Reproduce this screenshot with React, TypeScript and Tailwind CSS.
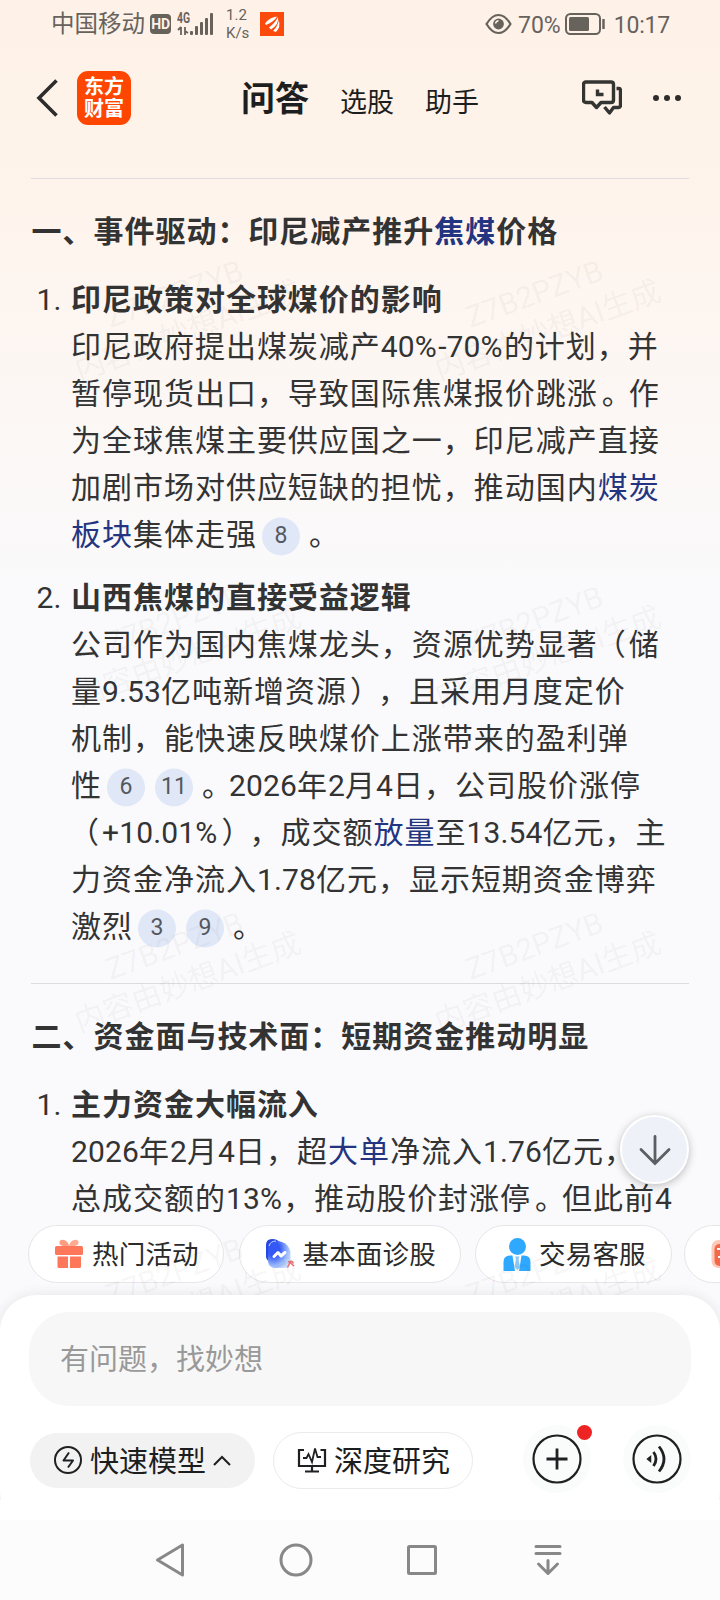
import React from "react";

type Part = string | { link: string } | { refs: number[] };

const WATERMARK_ROWS = [312, 638, 964, 1290];
const WATERMARK_COLS = [181, 541];

// Latin runs sit tighter than the Chinese text around them,
// stops and brackets are nudged towards the middle of their cell
function Mixed({ text }: { text: string }) {
  return (
    <>
      {text.split(/([0-9+.-]+|%|。|（|）)/).map((s, i) => {
        if (i % 2 === 0) return s;
        if (s === "。") return <span key={i} className="inline-block translate-x-1">{s}</span>;
        if (s === "（") return <span key={i} className="inline-block -translate-x-0.5">{s}</span>;
        if (s === "）") return <span key={i} className="inline-block translate-x-[3px]">{s}</span>;
        return (
          <span key={i} className={s === "%" ? "tracking-[1.3px]" : "tracking-[0.15px]"}>
            {s}
          </span>
        );
      })}
    </>
  );
}

function Line({ parts, bold }: { parts: Part[]; bold?: boolean }) {
  return (
    <div className={`flex h-[47px] items-center whitespace-nowrap ${bold ? "font-bold" : ""}`}>
      {parts.map((p, i) => {
        if (typeof p === "string") {
          return (
            <span key={i}>
              <Mixed text={p} />
            </span>
          );
        }
        if ("link" in p) {
          return (
            <span key={i} className="text-[#233580]">
              {p.link}
            </span>
          );
        }
        return p.refs.map((n) => (
          <span
            key={n}
            className="mx-[5px] flex size-[38px] translate-y-[1.5px] items-center justify-center rounded-full bg-[#e0e8f7] text-[23px] tracking-normal text-[#55585f]"
          >
            {n}
          </span>
        ));
      })}
    </div>
  );
}

function Item({ no, title, lines }: { no: number; title: string; lines: Part[][] }) {
  return (
    <li className="flex">
      <span className="w-10 shrink-0 pl-[5.5px] leading-[47px] tracking-normal">{no}.</span>
      <div>
        <Line bold parts={[title]} />
        {lines.map((l, i) => (
          <Line key={i} parts={l} />
        ))}
      </div>
    </li>
  );
}

function StatusBar() {
  return (
    <div className="flex h-12 shrink-0 items-center pl-[51px] pr-[50px] text-[#68625d]">
      <span className="mt-[2px] text-[23.5px] leading-none">中国移动</span>
      <span className="ml-[5px] flex h-5 w-[21px] items-center justify-center rounded bg-[#68625d] text-[14px] font-bold leading-none tracking-tight text-[#fef2e8]">
        HD
      </span>
      <svg className="ml-[6px]" width="38" height="26" viewBox="0 0 38 26" fill="#68625d">
        <text x="0" y="11.500" fontSize="14" fontWeight="700" fontFamily="Roboto" textLength="13" lengthAdjust="spacingAndGlyphs">
          4G
        </text>
        <path d="M4 16v8M1 19l3-3M8 16v8M8 20l3 2" stroke="#68625d" strokeWidth="1.800" fill="none" />
        <rect x="13" y="20" width="3" height="4" rx="1" />
        <rect x="18" y="15" width="3" height="9" rx="1" />
        <rect x="23" y="11" width="3" height="13" rx="1" />
        <rect x="28" y="7" width="3" height="17" rx="1" />
        <rect x="33" y="2" width="3" height="22" rx="1" />
      </svg>
      <span className="ml-[11px] w-[34px] text-[15px] leading-[18px]">
        1.2
        <br />
        K/s
      </span>
      <svg width="24" height="24" viewBox="0 0 24 24">
        <rect width="24" height="24" fill="#fb4a0b" />
        <path d="M5 11.500Q10 5 17 4.500Q14 10 6 13Z" fill="#fff" />
        <path d="M9 15.500Q15 11 18 5Q19.500 12 11 17.500Z" fill="#fff" />
        <path d="M13 19Q18 14 18.800 8Q21 15 16 20Z" fill="#fff" />
      </svg>
      <div className="ml-auto flex items-center">
        <svg width="27" height="22" viewBox="0 0 27 22" fill="none" stroke="#68625d" strokeWidth="2.200">
          <path d="M1.500 11Q7 2 13.500 2T25.500 11Q20 20 13.500 20T1.500 11Z" />
          <circle cx="13.500" cy="11" r="5.400" fill="#68625d" stroke="none" />
          <path d="M10.500 10.500q.5-2.500 3-2.800" stroke="#fef2e8" strokeWidth="1.400" />
        </svg>
        <span className="ml-[6px] mt-[2px] text-[23px] leading-none">70%</span>
        <svg className="ml-[4px]" width="41" height="22" viewBox="0 0 41 22" fill="none" stroke="#68625d">
          <rect x="1" y="1" width="34" height="20" rx="4.500" strokeWidth="2" />
          <rect x="4" y="4" width="20" height="14" rx="1.500" fill="#68625d" stroke="none" />
          <path d="M38.500 6v10" strokeWidth="2.500" />
        </svg>
        <span className="ml-[8px] mt-[2px] text-[23px] leading-none tracking-[-0.2px]">10:17</span>
      </div>
    </div>
  );
}

function Header() {
  return (
    <header className="flex h-[100px] shrink-0 items-center pl-[36px] pr-[38px] text-[#1d1e20]">
      <svg width="23" height="38" viewBox="0 0 23 38" fill="none" stroke="#2d2d2d" strokeWidth="3.600">
        <path d="M20.500 1.500L3 19L20.500 36.500" />
      </svg>
      <div className="ml-[18px] flex size-[54px] flex-col items-center justify-center rounded-[11px] bg-[#ff4600] text-[20px] font-bold leading-[22px] text-white">
        <span>东方</span>
        <span>财富</span>
      </div>
      <nav className="ml-[110px] flex items-center">
        <span className="mt-[2px] text-[34px] font-bold leading-none">问答</span>
        <span className="ml-[31px] mt-[10px] text-[27px] leading-none">选股</span>
        <span className="ml-[31px] mt-[10px] text-[27px] leading-none">助手</span>
      </nav>
      <svg className="ml-auto" width="40" height="36" viewBox="0 0 40 36" fill="none" stroke="#343432" strokeWidth="3.400" strokeLinejoin="round">
        <path d="M4 2H29Q31.500 2 31.500 4.500V20Q31.500 22.500 29 22.500H19L14.500 27.500L10 22.500H4Q1.500 22.500 1.500 20V4.500Q1.500 2 4 2Z" />
        <path d="M34.500 8.500H37Q38.500 8.500 38.500 10.500V25Q38.500 27.500 36.500 27.500H31.500L27.500 33L22.500 27" />
        <path d="M15.500 9.500V14.500H21.500" strokeLinejoin="miter" />
      </svg>
      <svg className="ml-[30px]" width="30" height="8" viewBox="0 0 30 8" fill="#2d2d2d">
        <circle cx="4" cy="4" r="3" />
        <circle cx="15" cy="4" r="3" />
        <circle cx="26" cy="4" r="3" />
      </svg>
    </header>
  );
}

function Chip({ icon, label, className }: { icon: React.ReactNode; label?: string; className: string }) {
  return (
    <div
      className={`flex h-[58px] shrink-0 items-center rounded-full border border-[#e6e6e8] bg-white text-[26.5px] text-[#2b2b2b] ${className}`}
    >
      {icon}
      {label && <span className="ml-2 mt-[3px] whitespace-nowrap leading-none tracking-[0.2px]">{label}</span>}
    </div>
  );
}

const giftIcon = (
  <svg width="30" height="30" viewBox="0 0 30 30">
    <path d="M15 7Q7 8 5.500 4.500Q5 0 10 1Q14 2 15 7Z" fill="#ff9c80" />
    <path d="M15 7Q23 8 24.500 4.500Q25 0 20 1Q16 2 15 7Z" fill="#ffab92" />
    <rect x="1" y="7" width="28" height="9" rx="1.500" fill="#ff775a" />
    <path d="M3.500 17.500H14V29H5Q3.500 29 3.500 27.500ZM16 17.500H27V27.500Q27 29 25.500 29H16Z" fill="#ff775a" />
  </svg>
);

const diagnoseIcon = (
  <svg width="30" height="32" viewBox="0 0 30 32">
    <defs>
      <radialGradient id="diag" cx="0.25" cy="0.3" r="0.9">
        <stop offset="0.300" stopColor="#3358f6" />
        <stop offset="0.700" stopColor="#9dbcfb" />
        <stop offset="1" stopColor="#dcebff" />
      </radialGradient>
    </defs>
    <path d="M1 7Q1 1 7 1Q13 1 15 5L10 24H6Q1 23 1 18Z" fill="#2747e0" />
    <path d="M3 10Q3 3 10 3Q18 3 22 7Q25.500 11 25.500 16V24Q25.500 30 19 30H10Q3.500 30 3 23Z" fill="url(#diag)" />
    <path d="M4 8Q5.500 3 11 3" stroke="#c5d6ff" strokeWidth="1" fill="none" />
    <path d="M9 18.500L13 14.500L16 18L20 14.500" stroke="#fff" strokeWidth="3" fill="none" strokeLinecap="round" strokeLinejoin="round" />
    <path d="M22.500 29.500L25 24.500L29 28M23 24Q27 22 28.500 25.500" stroke="#e8737a" strokeWidth="1.600" fill="none" />
  </svg>
);

const serviceIcon = (
  <svg width="28" height="34" viewBox="0 0 28 34">
    <circle cx="14.500" cy="9.500" r="8.500" fill="#2fa8ff" />
    <path d="M.5 34V25Q.5 18.500 7 18.500H9.500L12 34Z" fill="#2fa8ff" />
    <path d="M27.500 34V25Q27.500 18.500 21 18.500H18.500L16 34Z" fill="#2fa8ff" />
    <path d="M12 19.500H16.500L15.500 22L17 30L14.300 33L11.500 30L13 22Z" fill="#8cc6f5" />
  </svg>
);

const hotIcon = (
  <svg width="30" height="30" viewBox="0 0 30 30">
    <rect x="0.500" y="1" width="29" height="28" rx="7" fill="#ffc9b8" />
    <rect x="3.500" y="5" width="26" height="22" rx="5" fill="#f4684a" />
    <path d="M6 10H22M12 6V14M7 18H22" stroke="#fff" strokeWidth="2.200" />
  </svg>
);

function Composer() {
  return (
    <>
      <section className="relative z-20 -mb-7 flex h-[233px] shrink-0 flex-col rounded-[36px] bg-white px-[29px] pt-[17px] shadow-[0_0_14px_rgba(0,0,0,0.09)]">
        <div className="flex h-[94px] shrink-0 items-center rounded-[40px] bg-[#f7f7f7] pl-[31px] pt-[3px] text-[29px] text-[#999]">
          有问题，找妙想
        </div>
        <div className="mt-[19px] flex h-[68px] shrink-0 items-center text-[29px] leading-none text-[#1c1d1f]">
          <button type="button" className="ml-px mt-[3px] flex h-[55px] w-[225px] items-center rounded-full bg-[#f2f2f2] pl-[24px]">
            <svg className="-mt-px" width="28" height="28" viewBox="0 0 28 28" fill="none" stroke="#1f2022" strokeWidth="2">
              <circle cx="14" cy="14" r="13" />
              <path d="M15 6.500L9.500 14.500H19L14 21.500" strokeLinejoin="round" />
            </svg>
            <span className="ml-[8px] mt-[4px]">快速模型</span>
            <svg className="ml-[7px]" width="18" height="11" viewBox="0 0 18 11" fill="none" stroke="#1f2022" strokeWidth="2">
              <path d="M1 10L9 2L17 10" />
            </svg>
          </button>
          <button type="button" className="ml-[18px] mt-[3px] flex h-[57px] w-[200px] items-center rounded-full border border-[#ebebeb] bg-white pl-[23px]">
            <svg className="-mt-px" width="30" height="28" viewBox="0 0 30 28" fill="none" stroke="#1f2022" strokeWidth="2.200">
              <path d="M7 4H2V20H28V4H23.500" />
              <path d="M6 12H9.500L11.500 8L15 16L18 2.500L20.500 11H24" strokeWidth="1.800" />
              <path d="M15 20V25.500M8 25.500H22" />
            </svg>
            <span className="ml-[7px] mt-[4px]">深度研究</span>
          </button>
          <button type="button" className="relative ml-[50px] flex size-[68px] items-center justify-center rounded-full bg-[#fafbfb]">
            <svg width="50" height="50" viewBox="0 0 50 50" fill="none" stroke="#1f2022" strokeWidth="2.200">
              <circle cx="25" cy="25" r="23.500" />
              <path d="M14.500 25H35.500M25 14.500V35.500" strokeWidth="2.800" />
            </svg>
            <span className="absolute -right-px top-0 size-[15px] rounded-full bg-[#ee2424]" />
          </button>
          <button type="button" className="ml-[32px] flex size-[68px] shrink-0 items-center justify-center rounded-full bg-[#fafbfb]">
            <svg width="50" height="50" viewBox="0 0 50 50" fill="none" stroke="#1f2022">
              <circle cx="25" cy="25" r="23.500" strokeWidth="2.200" />
              <path d="M15.500 25L18.500 22.500V27.500Z" fill="#1f2022" strokeWidth="1.500" />
              <path d="M21.500 18Q26.500 25 21.500 32M27 12.500Q37 25 27 37.500" strokeWidth="2.800" />
            </svg>
          </button>
        </div>
      </section>
      <div className="relative z-20 h-5 shrink-0 bg-white" />
    </>
  );
}

function SystemNav() {
  return (
    <footer className="relative z-20 flex h-20 shrink-0 items-center bg-[#fcfcfc] pl-[153px]">
      <svg width="409" height="40" viewBox="0 0 409 40" fill="none" stroke="#888" strokeWidth="3" strokeLinejoin="round" strokeLinecap="round">
        <path d="M29.500 5V35L4.500 20Z" />
        <circle cx="143" cy="20" r="15" />
        <rect x="255.500" y="6.500" width="27" height="27" rx="1" />
        <path d="M383 6.500H407M383 13.500H407M395 20.500V33M385.500 24L395 33.500L404.500 24" />
      </svg>
    </footer>
  );
}

export default function App(): React.ReactElement {
  return (
    <main className="relative flex h-[1600px] w-[720px] flex-col overflow-hidden bg-[#fafafd] bg-[linear-gradient(180deg,#fef2e8_0px,#fef3ea_160px,#fef5ef_260px,#fcf7f4_400px,#fafafc_600px,#fafafd_700px)] font-['Roboto','Noto_Sans_CJK_SC',sans-serif] [text-spacing-trim:space-all]">
      <StatusBar />
      <Header />

      <article className="h-[1077px] shrink-0 overflow-hidden px-[31px] pt-[30px] text-[30px] tracking-[0.98px] text-[#333]">
        <hr className="border-[#dfdddd]" />
        <h2 className="mt-[29px] pl-[0.5px]">
          <Line bold parts={["一、事件驱动：印尼减产推升", { link: "焦煤" }, "价格"]} />
        </h2>
        <ol className="mt-[21px] space-y-4">
          <Item
            no={1}
            title="印尼政策对全球煤价的影响"
            lines={[
              ["印尼政府提出煤炭减产40%-70%的计划，并"],
              ["暂停现货出口，导致国际焦煤报价跳涨。作"],
              ["为全球焦煤主要供应国之一，印尼减产直接"],
              ["加剧市场对供应短缺的担忧，推动国内", { link: "煤炭" }],
              [{ link: "板块" }, "集体走强", { refs: [8] }, "。"],
            ]}
          />
          <Item
            no={2}
            title="山西焦煤的直接受益逻辑"
            lines={[
              ["公司作为国内焦煤龙头，资源优势显著（储"],
              ["量9.53亿吨新增资源），且采用月度定价"],
              ["机制，能快速反映煤价上涨带来的盈利弹"],
              ["性", { refs: [6, 11] }, "。2026年2月4日，公司股价涨停"],
              ["（+10.01%），成交额", { link: "放量" }, "至13.54亿元，主"],
              ["力资金净流入1.78亿元，显示短期资金博弈"],
              ["激烈", { refs: [3, 9] }, "。"],
            ]}
          />
        </ol>
        <hr className="mt-[33px] border-[#dddde0]" />
        <h2 className="mt-[29px] pl-[0.5px]">
          <Line bold parts={["二、资金面与技术面：短期资金推动明显"]} />
        </h2>
        <ol className="mt-[21px]">
          <Item
            no={1}
            title="主力资金大幅流入"
            lines={[
              ["2026年2月4日，超", { link: "大单" }, "净流入1.76亿元，"],
              ["总成交额的13%，推动股价封涨停。但此前4"],
            ]}
          />
        </ol>
      </article>

      <div className="flex h-[70px] shrink-0 gap-[14.5px] overflow-hidden pl-[28px]">
        <Chip icon={giftIcon} label="热门活动" className="w-[196px] pl-[25px]" />
        <Chip icon={diagnoseIcon} label="基本面诊股" className="w-[222px] pl-[25px]" />
        <Chip icon={serviceIcon} label="交易客服" className="w-[197px] pl-[27px]" />
        <Chip icon={hotIcon} className="-ml-[3px] w-[196px] pl-[26px]" />
      </div>

      <Composer />
      <SystemNav />

      <button
        type="button"
        className="absolute left-[620px] top-[1115px] z-10 flex size-[69px] items-center justify-center rounded-full border-2 border-white bg-[#eef1f7] shadow-[0_2px_8px_rgba(0,0,0,0.25)]"
      >
        <svg width="32" height="32" viewBox="0 0 32 32" fill="none" stroke="#5d5e62" strokeWidth="2.800" strokeLinecap="round">
          <path d="M16 2.500V29M2 15.500L16 29.500L30 15.500" />
        </svg>
      </button>

      <div aria-hidden className="pointer-events-none absolute inset-0">
        {WATERMARK_ROWS.map((y) =>
          WATERMARK_COLS.map((x) => (
            <div
              key={`${x}-${y}`}
              className="absolute -translate-x-1/2 -translate-y-1/2 -rotate-20 whitespace-nowrap text-center text-[30px] leading-[39px] text-black/5"
              style={{ left: x, top: y }}
            >
              Z7B2PZYB
              <br />
              内容由妙想AI生成
            </div>
          ))
        )}
      </div>
    </main>
  );
}
